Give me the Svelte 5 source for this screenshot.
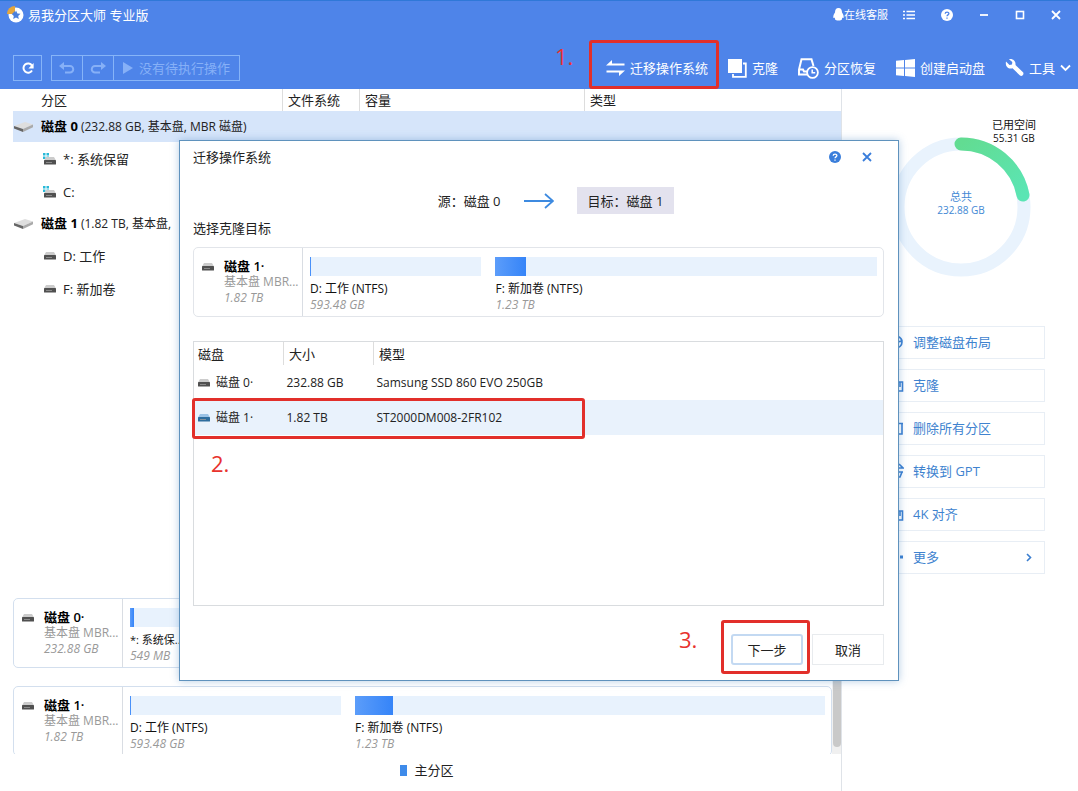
<script lang="ts">
  type Segment = { name: string; size: string; grow: number; used: number };
  type Disk = { id: number; size: string; segments: Segment[] };

  const hdd: Segment[] = [
    { name: 'D: 工作 (NTFS)', size: '593.48 GB', grow: 31, used: 0 },
    { name: 'F: 新加卷 (NTFS)', size: '1.23 TB', grow: 69, used: 8 },
  ];

  const disks: Disk[] = [
    {
      id: 0,
      size: '232.88 GB',
      segments: [{ name: '*: 系统保...', size: '549 MB', grow: 0, used: 7 }],
    },
    { id: 1, size: '1.82 TB', segments: hdd },
  ];

  const tree = [
    { disk: 0, info: '(232.88 GB, 基本盘, MBR 磁盘)', system: true, parts: ['*: 系统保留', 'C:'] },
    { disk: 1, info: '(1.82 TB, 基本盘,', system: false, parts: ['D: 工作', 'F: 新加卷'] },
  ];

  const models = [
    { id: 0, size: '232.88 GB', model: 'Samsung SSD 860 EVO 250GB' },
    { id: 1, size: '1.82 TB', model: 'ST2000DM008-2FR102' },
  ];

  const actions = [
    { icon: 'adjust', label: '调整磁盘布局' },
    { icon: 'clone', label: '克隆' },
    { icon: 'trash', label: '删除所有分区' },
    { icon: 'convert', label: '转换到 GPT' },
    { icon: 'clone', label: '4K 对齐' },
    { icon: 'more', label: '更多' },
  ];

  let target = $state(1);
</script>

{#snippet drive(blue: boolean)}
  <svg class="drive" class:blue width="12" height="8" viewBox="0 0 12 8" aria-hidden="true">
    <path class="lid" d="M2 0h8l2 3.500H0z" />
    <rect class="base" y="3" width="12" height="4.500" rx="0.600" />
    <path d="M2 5.500h6" stroke="#999" stroke-width="0.800" />
  </svg>
{/snippet}

{#snippet help(size: number)}
  <svg width={size} height={size} viewBox="0 0 12 12" aria-hidden="true">
    <circle cx="6" cy="6" r="6" fill="currentColor" />
    <path class="hook" d="M4.200 4.700C4.200 2.500 7.900 2.500 7.900 4.600C7.900 5.900 6 5.900 6 7.300M6 8.400v1.300" />
  </svg>
{/snippet}

{#snippet cross()}
  <svg width="10" height="10" viewBox="0 0 10 10" aria-hidden="true">
    <path d="M1 1l8 8M9 1L1 9" stroke="currentColor" stroke-width="1.800" />
  </svg>
{/snippet}

{#snippet diskCard(disk: Disk)}
  <section class="card">
    <div class="card-head">
      {@render drive(false)}
      <div class="card-text">
        <strong>磁盘 <span>{disk.id}·</span></strong>
        <p>基本盘 MBR...</p>
        <em>{disk.size}</em>
      </div>
    </div>
    <div class="segments">
      {#each disk.segments as s}
        <div class="segment" class:small={!s.grow} style:flex-grow={s.grow}>
          <div class="bar"><i style:width="{s.used}%"></i></div>
          <p>{s.name}</p>
          <em>{s.size}</em>
        </div>
      {/each}
    </div>
  </section>
{/snippet}

<div class="window">
  <header>
    <div class="titlebar">
      <svg width="17" height="17" viewBox="0 0 17 17" aria-hidden="true">
        <circle cx="9" cy="9" r="7.500" fill="#fff" />
        <path d="M9 4.500l1.400 2.900 3.100.4-2.300 2.200.6 3.100L9 11.600l-2.800 1.500.6-3.100-2.300-2.200 3.100-.4z" fill="#4b7fdc" />
        <path d="M8 8V0A8 8 0 0 0 0 8z" fill="#e5a63e" />
        <path d="M8 8V5L5 8z" fill="#4b7fdc" />
      </svg>
      <h1>易我分区大师 专业版</h1>
      <div class="window-buttons">
        <button class="service">
          <svg width="11" height="13" viewBox="0 0 11 13" aria-hidden="true">
            <path d="M5.500 0C3 0 2 2 2 4.500C.8 6 0 8 .4 10L2 9.800C1.600 11 2 12.400 4 12.400H7C9 12.400 9.400 11 9 9.800L10.600 10C11 8 10.200 6 9 4.500C9 2 8 0 5.500 0z" fill="#fff" />
          </svg>
          在线客服
        </button>
        <button aria-label="菜单">
          <svg width="12" height="10" viewBox="0 0 12 10" aria-hidden="true">
            <path d="M0 1.500h2M3.500 1.500H12M0 5h2M3.500 5H12M0 8.500h2M3.500 8.500H12" stroke="#fff" stroke-width="1.500" />
          </svg>
        </button>
        <button class="help-light" aria-label="帮助">{@render help(12)}</button>
        <button aria-label="最小化">
          <svg width="10" height="10" viewBox="0 0 10 10" aria-hidden="true">
            <path d="M1 5h8" stroke="#fff" stroke-width="1.800" />
          </svg>
        </button>
        <button aria-label="最大化">
          <svg width="10" height="10" viewBox="0 0 10 10" aria-hidden="true">
            <rect x="1.500" y="1.500" width="7" height="7" fill="none" stroke="#fff" stroke-width="1.600" />
          </svg>
        </button>
        <button aria-label="关闭">{@render cross()}</button>
      </div>
    </div>

    <div class="toolbar">
      <button class="boxed refresh" aria-label="刷新">
        <svg width="14" height="14" viewBox="0 0 14 14" aria-hidden="true">
          <path d="M11 9.500A4.600 4.600 0 1 1 11 4.700" fill="none" stroke="#fff" stroke-width="2" />
          <path d="M12.600 2v5.400H7.400z" fill="#fff" />
        </svg>
      </button>
      <div class="boxed pending">
        <button disabled aria-label="撤销">
          <svg width="16" height="12" viewBox="0 0 16 12" aria-hidden="true">
            <path d="M2 4h9a3 3 0 0 1 0 6.500H6" fill="none" stroke="currentColor" stroke-width="2" />
            <path d="M0 4l5-4v8z" fill="currentColor" />
          </svg>
        </button>
        <button disabled aria-label="重做">
          <svg width="16" height="12" viewBox="0 0 16 12" aria-hidden="true">
            <path d="M14 4H5a3 3 0 0 0 0 6.500h5" fill="none" stroke="currentColor" stroke-width="2" />
            <path d="M16 4l-5-4v8z" fill="currentColor" />
          </svg>
        </button>
        <button disabled class="run">
          <svg width="10" height="12" viewBox="0 0 10 12" aria-hidden="true">
            <path d="M0 0l10 6-10 6z" fill="currentColor" />
          </svg>
          没有待执行操作
        </button>
      </div>

      <nav>
        <button class="marked">
          <svg width="19" height="18" viewBox="0 0 19 18" aria-hidden="true">
            <path d="M0 6.500L6 1v3.500h12.500v2zM19 11.500L13 17v-3.500H.5v-2z" fill="#fff" />
          </svg>
          迁移操作系统
          <span class="mark mark-nav"><b>1.</b></span>
        </button>
        <button>
          <svg width="19" height="19" viewBox="0 0 19 19" aria-hidden="true">
            <path d="M0 0h14v14H0z" fill="#fff" />
            <path d="M15 4.500h2.800v13.300H5V15" fill="none" stroke="#fff" stroke-width="1.800" />
          </svg>
          克隆
        </button>
        <button>
          <svg width="21" height="21" viewBox="0 0 21 21" aria-hidden="true">
            <path d="M9 16.500H1v-5L3.500 1.200h10L15.500 8M1 11.500h4l1 2h3" fill="none" stroke="#fff" stroke-width="2" />
            <circle cx="14.500" cy="14.500" r="5.400" fill="none" stroke="#fff" stroke-width="1.800" />
            <path d="M14.200 11.500v3.300h3" fill="none" stroke="#fff" stroke-width="1.500" />
          </svg>
          分区恢复
        </button>
        <button>
          <svg width="19" height="18" viewBox="0 0 19 18" aria-hidden="true">
            <path d="M0 1.800L8 1v7.500H0zM9 .9L19 0v8.500H9zM0 9.500h8V17l-8-.8zM9 9.500h10V18l-10-.9z" fill="#fff" />
          </svg>
          创建启动盘
        </button>
        <button>
          <svg width="19" height="18" viewBox="0 0 19 18" aria-hidden="true">
            <path d="M1 2.500L4.500 6L7 5.500L7.300 3L4 .3C7.500-.8 11 2 10.500 6L18 13.200C19.500 15 17 18 15 16.500L7.500 9.300C3 10.500 0 7 1 2.500z" fill="#fff" />
          </svg>
          工具
          <svg width="11" height="8" viewBox="0 0 11 8" aria-hidden="true">
            <path d="M1 1.500l4.500 4.500L10 1.500" fill="none" stroke="#fff" stroke-width="1.800" />
          </svg>
        </button>
      </nav>
    </div>
  </header>

  <main>
    <div class="left">
      <table class="tree">
        <thead>
          <tr><th>分区</th><th>文件系统</th><th>容量</th><th>类型</th></tr>
        </thead>
        <tbody>
          {#each tree as d}
            <tr class="disk-row" class:selected={d.disk === 0}>
              <td colspan="4">
                <div class="cell">
                  <svg width="19" height="10" viewBox="0 0 19 10" aria-hidden="true">
                    <path d="M0 4L11 0l8 2.500L9 7z" fill="#dedede" />
                    <path d="M0 4l9 3v3L0 6.500z" fill="#666" />
                    <path d="M9 7l10-4.500v2.800L9 10z" fill="#aaa" />
                  </svg>
                  <span><strong>磁盘 {d.disk}</strong> {d.info}</span>
                </div>
              </td>
            </tr>
            {#each d.parts as part}
              <tr class="part-row">
                <td colspan="4">
                  <div class="cell">
                    <span class="part-icon">
                      {#if d.system}
                        <svg class="flag" width="6" height="6" viewBox="0 0 6 6" aria-hidden="true">
                          <path d="M0 0h2.500v2.500H0zM3.500 0H6v2.500H3.500zM0 3.500h2.500V6H0zM3.500 3.500H6V6H3.500z" fill="#29b9d8" />
                        </svg>
                      {/if}
                      {@render drive(false)}
                    </span>
                    {part}
                  </div>
                </td>
              </tr>
            {/each}
          {/each}
        </tbody>
      </table>

      <div class="maps">
        <div class="map-list">
          {#each disks as disk}
            {@render diskCard(disk)}
          {/each}
        </div>
        <div class="scrollbar"><i></i></div>
      </div>
      <p class="legend"><i></i>主分区</p>
    </div>

    <aside>
      <svg class="donut" width="168" height="170" viewBox="0 0 168 170">
        <defs>
          <linearGradient id="used" x1="0" y1="0" x2="1" y2="1">
            <stop offset="0" stop-color="#62dc92" />
            <stop offset="1" stop-color="#5be5b4" />
          </linearGradient>
        </defs>
        <circle cx="84" cy="99" r="63" fill="none" stroke="#e9f3fd" stroke-width="13" />
        <path d="M84 36A63 63 0 0 1 146 87" fill="none" stroke="url(#used)" stroke-width="13" stroke-linecap="round" />
        <text class="used" x="115" y="21">已用空间</text>
        <text class="used figure" x="116" y="34">55.31 GB</text>
        <text class="total" x="84" y="93">总共</text>
        <text class="total figure" x="84" y="106">232.88 GB</text>
      </svg>
      <ul>
        {#each actions as a}
          <li>
            <button>
              <svg width="16" height="16" viewBox="0 0 16 16" aria-hidden="true">
                {#if a.icon === 'adjust'}
                  <path d="M8 2a6 6 0 1 0 6 6M10 2.500A6 6 0 0 1 14 7L9 8z" />
                {:else if a.icon === 'clone'}
                  <path d="M1 1h8v9H1zM10 5h4.500v9H5v-3M12 5v5" />
                {:else if a.icon === 'trash'}
                  <path d="M1 3.500h14M3 3.500V14h11V4M6 3.500v-2h4v2" />
                {:else if a.icon === 'convert'}
                  <path d="M1 5h14L11 1M15 9H3M14 9l-2 5H8" />
                {:else}
                  <path class="dots" d="M1 8h3M6 8h3M12 8h3" />
                {/if}
              </svg>
              {a.label}
              {#if a.icon === 'more'}
                <svg class="next" width="6" height="9" viewBox="0 0 6 9" aria-hidden="true">
                  <path d="M1 1l3.500 3.500L1 8" />
                </svg>
              {/if}
            </button>
          </li>
        {/each}
      </ul>
    </aside>
  </main>

  <div class="overlay">
    <div class="dialog" role="dialog" aria-labelledby="dialog-title">
      <div class="dialog-title">
        <h2 id="dialog-title">迁移操作系统</h2>
        <button class="help-blue" aria-label="帮助">{@render help(12)}</button>
        <button aria-label="关闭">{@render cross()}</button>
      </div>

      <div class="route">
        <span>源：磁盘 0</span>
        <svg width="30" height="16" viewBox="0 0 30 16" aria-hidden="true">
          <path d="M0 8h29M21 1l8 7-8 7" fill="none" stroke="#3d8ae0" stroke-width="1.800" />
        </svg>
        <span class="target">目标：磁盘 {target}</span>
      </div>

      <h3>选择克隆目标</h3>
      {@render diskCard(disks[1])}

      <div class="models">
        <table>
          <thead>
            <tr><th>磁盘</th><th>大小</th><th>模型</th></tr>
          </thead>
          <tbody>
            {#each models as m}
              <tr class:selected={target === m.id} onclick={() => (target = m.id)}>
                <td><div class="cell">{@render drive(target === m.id)}磁盘 {m.id}·</div></td>
                <td>{m.size}</td>
                <td>{m.model}</td>
              </tr>
            {/each}
          </tbody>
        </table>
        <span class="mark mark-row"><b>2.</b></span>
      </div>

      <footer>
        <button class="primary">下一步<span class="mark mark-next"><b>3.</b></span></button>
        <button>取消</button>
      </footer>
    </div>
  </div>
</div>

<style>
  :global(body) {
    margin: 0;
    background: #fff;
  }

  .window {
    position: relative;
    display: flex;
    flex-direction: column;
    min-height: 100vh;
    overflow: hidden;
    color: #222;
    font: 13px/16px 'Open Sans', 'Noto Sans CJK SC', sans-serif;
  }

  h1, h2, h3, p, ul {
    margin: 0;
    padding: 0;
    font-size: 13px;
    font-weight: 400;
    list-style: none;
  }

  button {
    display: flex;
    align-items: center;
    padding: 0;
    border: none;
    background: none;
    color: inherit;
    font: inherit;
    white-space: nowrap;
    cursor: pointer;
  }

  svg {
    flex: none;
  }

  table {
    width: 100%;
    border-collapse: collapse;
    table-layout: fixed;
  }

  th, td {
    padding: 0;
    font-weight: 400;
    text-align: left;
    white-space: nowrap;
  }

  em {
    display: block;
    color: #999;
    font-size: 12px;
    line-height: 15px;
  }

  header {
    box-sizing: border-box;
    height: 89px;
    border-top: 1px solid #2f78d8;
    background: #4e84e9;
    color: #fff;
  }

  .titlebar {
    display: flex;
    align-items: center;
    gap: 4px;
    height: 27px;
    padding: 0 17px 0 7px;
  }

  .window-buttons {
    display: flex;
    align-items: center;
    gap: 26px;
    margin-left: auto;
  }

  .service {
    font-size: 11px;
    margin-right: -11px;
  }

  .hook {
    fill: none;
    stroke: #fff;
    stroke-width: 1.3px;
  }

  .help-light .hook {
    stroke: #4e84e9;
  }

  .toolbar {
    display: flex;
    align-items: center;
    height: 26px;
    padding: 27px 7px 0 13px;
  }

  .boxed {
    box-sizing: border-box;
    height: 26px;
    border: 1px solid #86b4f8;
  }

  .refresh {
    justify-content: center;
    width: 29px;
  }

  .pending {
    display: flex;
    margin-left: 9px;
    color: #86b0f7;
  }

  .pending button {
    box-sizing: border-box;
    justify-content: center;
    width: 31px;
    border-right: 1px solid #86b4f8;
  }

  .pending .run {
    gap: 6px;
    width: 125px;
    border: none;
  }

  nav {
    display: flex;
    gap: 20px;
    margin-left: auto;
  }

  nav button {
    gap: 5px;
    height: 26px;
  }

  .marked, .primary, .models {
    position: relative;
  }

  .mark {
    position: absolute;
    border: 3px solid #e22f2a;
    border-radius: 3px;
    pointer-events: none;
  }

  .mark b {
    position: absolute;
    color: #e8322d;
    font-size: 22px;
    font-weight: 400;
    line-height: 24px;
  }

  .mark-nav {
    inset: -15px -11px -8px -17px;
  }

  .mark-nav b {
    top: 1px;
    left: -37px;
  }

  .mark-row {
    top: 56px;
    left: -2px;
    width: 387px;
    height: 35px;
  }

  .mark-row b {
    top: 50px;
    left: 16px;
  }

  .mark-next {
    inset: -16px -9px -11px -12px;
  }

  .mark-next b {
    top: 4px;
    left: -45px;
  }

  main {
    display: flex;
    flex: 1;
  }

  .left {
    display: flex;
    flex: 1;
    flex-direction: column;
    min-width: 0;
    padding-left: 13px;
    border-right: 1px solid #dfe3e8;
  }

  .tree th {
    height: 22px;
    padding-left: 5px;
    border-left: 1px solid #ddd;
  }

  .tree th:nth-child(1) {
    width: 241px;
    padding-left: 28px;
    border: none;
  }

  .tree th:nth-child(2) {
    width: 71px;
  }

  .tree th:nth-child(3) {
    width: 219px;
  }

  .disk-row {
    height: 31px;
    font-size: 12px;
  }

  .disk-row strong {
    color: #000;
    font-size: 13px;
  }

  .selected {
    background: #d6e5fa;
  }

  .part-row {
    height: 33px;
  }

  .cell {
    display: flex;
    align-items: center;
    gap: 8px;
  }

  .disk-row .cell {
    padding-left: 1px;
  }

  .part-row .cell {
    gap: 7px;
    padding-left: 30px;
  }

  .part-icon {
    display: flex;
    flex-direction: column;
    align-items: flex-end;
    width: 13px;
  }

  .flag {
    align-self: flex-start;
    margin-bottom: -2px;
  }

  .lid {
    fill: #ccc;
  }

  .base {
    fill: #505050;
  }

  .blue .lid {
    fill: #9cc3e6;
  }

  .blue .base {
    fill: #2e6d9e;
  }

  .maps {
    display: flex;
    justify-content: space-between;
    height: 156px;
    margin-top: auto;
  }

  .map-list {
    flex: 1;
    min-width: 0;
    overflow: hidden;
  }

  .map-list .card {
    margin-bottom: 18px;
    border-color: #d3dfee;
  }

  .scrollbar {
    width: 9px;
    background: #f0f0f0;
  }

  .scrollbar i {
    display: block;
    width: 8px;
    height: 149px;
    margin-left: 1px;
    border-radius: 4px;
    background: #c9c9c9;
  }

  .card {
    box-sizing: border-box;
    display: flex;
    height: 70px;
    border: 1px solid #e2e5ea;
    border-radius: 5px;
    background: #fff;
  }

  .card-head {
    box-sizing: border-box;
    display: flex;
    flex: none;
    gap: 10px;
    width: 109px;
    padding: 10px 0 0 8px;
    border-right: 1px solid #d9dde3;
  }

  .card-head .drive {
    margin-top: 5px;
  }

  .card-text strong {
    display: block;
    color: #000;
  }

  .card-text strong span {
    font-weight: 600;
  }

  .card-text p {
    color: #999;
    font-size: 12px;
    white-space: nowrap;
  }

  .segments {
    display: flex;
    flex: 1;
    gap: 14px;
    min-width: 0;
    padding: 9px 6px 0 7px;
  }

  .segment {
    flex-basis: 0;
    min-width: 0;
  }

  .segment.small {
    flex: none;
    width: 56px;
  }

  .segment p {
    margin-top: 5px;
    color: #111;
    font-size: 12px;
    white-space: nowrap;
  }

  .segment.small p {
    font-size: 11px;
  }

  .bar {
    height: 19px;
    background: #e8f2fd;
  }

  .bar i {
    display: block;
    min-width: 1px;
    height: 100%;
    background: linear-gradient(to right, #5c9dfa, #3584f8);
  }

  .legend {
    display: flex;
    align-items: center;
    justify-content: center;
    gap: 7px;
    height: 32px;
    margin-bottom: 5px;
  }

  .legend i {
    width: 7px;
    height: 11px;
    background: #3e8bea;
  }

  aside {
    flex: none;
    box-sizing: border-box;
    width: 236px;
    padding: 19px 33px 0 35px;
  }

  .donut {
    display: block;
    overflow: visible;
  }

  .donut text {
    fill: #111;
    font-size: 11px;
  }

  .donut .figure {
    font-size: 10px;
  }

  .donut .total {
    fill: #4288d4;
    text-anchor: middle;
  }

  aside ul {
    display: flex;
    flex-direction: column;
    gap: 10px;
    margin-top: 48px;
  }

  aside li button {
    box-sizing: border-box;
    gap: 9px;
    width: 100%;
    height: 33px;
    padding: 0 12px 1px 10px;
    border: 1px solid #e8eef5;
    color: #4083cf;
  }

  aside path {
    fill: none;
    stroke: #3a7ed0;
    stroke-width: 1.6px;
  }

  aside .dots {
    stroke-width: 3px;
  }

  .donut path {
    stroke: url(#used);
    stroke-width: 13px;
  }

  .next {
    margin-left: auto;
  }

  .overlay {
    position: absolute;
    inset: 0;
    display: flex;
    align-items: flex-start;
    justify-content: center;
    padding-top: 140px;
    pointer-events: none;
  }

  .dialog {
    box-sizing: border-box;
    display: flex;
    flex-direction: column;
    width: 720px;
    min-height: 541px;
    padding: 0 14px 15px 13px;
    border: 1px solid #5f92bd;
    background: #fff;
    box-shadow: 0 0 8px rgba(70, 130, 190, 0.4);
    pointer-events: auto;
  }

  .dialog-title {
    display: flex;
    align-items: center;
    gap: 21px;
    height: 31px;
    padding-right: 12px;
    color: #3a7edb;
  }

  .dialog-title h2 {
    margin-right: auto;
    color: #222;
  }

  .route {
    display: flex;
    align-items: center;
    justify-content: center;
    gap: 23px;
    height: 27px;
    margin-top: 15px;
    padding-left: 35px;
  }

  .target {
    padding: 6px 11px 5px;
    background: #e3e2ee;
  }

  h3 {
    margin: 6px 0 11px;
  }

  .models {
    height: 263px;
    margin-top: 24px;
    border: 1px solid #d9dcdf;
  }

  .models th {
    height: 23px;
    padding-left: 5px;
    border-left: 1px solid #ddd;
  }

  .models th:first-child {
    width: 85px;
    padding-left: 4px;
    border: none;
  }

  .models th:nth-child(2) {
    width: 84px;
  }

  .models tbody tr {
    height: 35px;
    font-size: 12px;
  }

  .models .selected {
    background: #e9f2fc;
  }

  .models td {
    padding-left: 3px;
  }

  .models .cell {
    gap: 6px;
    padding-left: 1px;
  }

  footer {
    display: flex;
    justify-content: flex-end;
    gap: 9px;
    margin-top: auto;
  }

  footer button {
    box-sizing: border-box;
    justify-content: center;
    width: 72px;
    height: 31px;
    border: 1px solid #e8ebee;
  }

  footer .primary {
    border: 2px solid #c3d9f2;
    border-radius: 3px;
  }
</style>
